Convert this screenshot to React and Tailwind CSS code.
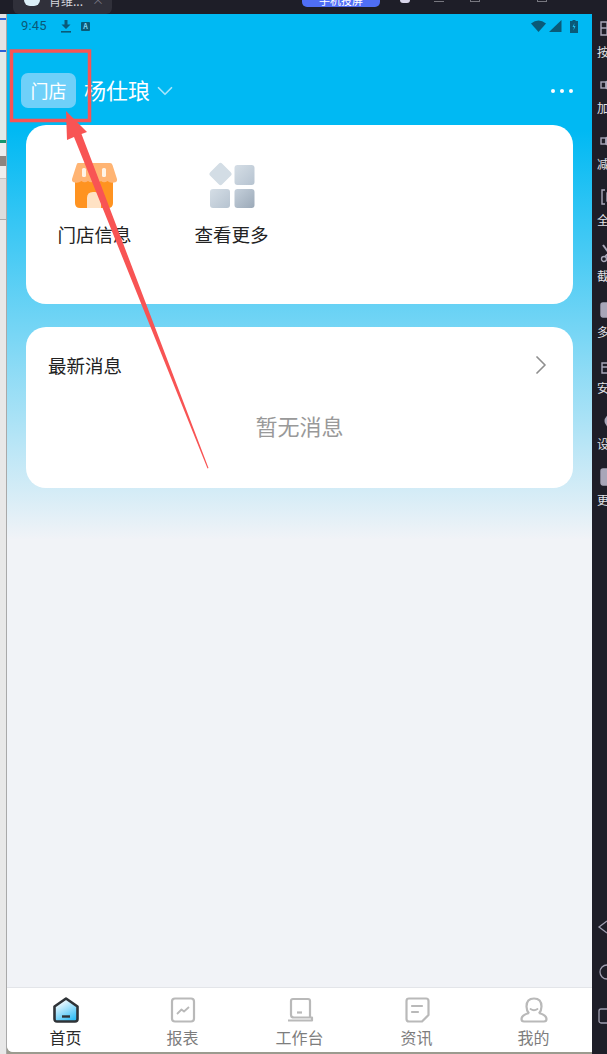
import { ChevronDown, ChevronRight } from 'lucide-react'

const GRAY = '#b9b9b9'

const TabIcon = ({ name }) => {
  if (name === 'home') {
    return (
      <svg width="28" height="28" viewBox="0 0 28 28" fill="none">
        <defs>
          <linearGradient id="homeFill" x1="0.2" y1="0.1" x2="0.7" y2="1">
            <stop offset="0" stopColor="#ffffff" />
            <stop offset="1" stopColor="#2fbcf6" />
          </linearGradient>
        </defs>
        <path d="M14 2.5 L25.5 10.5 V23 Q25.5 25.5 23 25.5 H5 Q2.5 25.5 2.5 23 V10.5 Z" fill="url(#homeFill)" stroke="#2f3337" strokeWidth="2.6" strokeLinejoin="round" />
        <path d="M10 20.5 H18" stroke="#2f3337" strokeWidth="2.4" />
      </svg>
    )
  }
  if (name === 'report') {
    return (
      <svg width="28" height="28" viewBox="0 0 28 28" fill="none" stroke={GRAY} strokeWidth="2.2" strokeLinejoin="round">
        <rect x="3" y="2.5" width="22" height="23" rx="3" />
        <path d="M8 18 L12.5 13.5 L15 15.5 L20 11" strokeWidth="1.8" />
      </svg>
    )
  }
  if (name === 'desk') {
    return (
      <svg width="28" height="28" viewBox="0 0 28 28" fill="none" stroke={GRAY} strokeWidth="2.2" strokeLinejoin="round">
        <path d="M5 19 V5 Q5 3 7 3 H22 Q24 3 24 5 V21" />
        <path d="M2 24.5 H26 V21.5 H8 Q5 21.5 5 19" />
        <path d="M11 16.5 H16" />
      </svg>
    )
  }
  if (name === 'news') {
    return (
      <svg width="28" height="28" viewBox="0 0 28 28" fill="none" stroke={GRAY} strokeWidth="2.2" strokeLinejoin="round">
        <path d="M6 2.5 H23 Q25.5 2.5 25.5 5 V19 L19 25.5 H6 Q3.5 25.5 3.5 23 V5 Q3.5 2.5 6 2.5 Z" />
        <path d="M9 10 H19 M9 16 H15" strokeLinecap="round" />
      </svg>
    )
  }
  return (
    <svg width="30" height="28" viewBox="0 0 30 28" fill="none" stroke={GRAY} strokeWidth="2.2" strokeLinejoin="round">
      <path d="M10 17.5 Q7.5 14.5 7.5 10.5 Q7.5 2.5 15 2.5 Q22.5 2.5 22.5 10.5 Q22.5 14.5 20 17.5" />
      <path d="M10 17 C7 18 2.5 19 2.5 23 Q2.5 25.5 5 25.5 H25 Q27.5 25.5 27.5 23 C27.5 19 23 18 20 17" />
      <path d="M11.5 13 Q15 15.5 18.5 13" strokeWidth="1.8" strokeLinecap="round" />
    </svg>
  )
}

const StoreIcon = () => (
  <svg width="46" height="46" viewBox="0 0 46 46">
    <path d="M3 18 H41 V41 Q41 46 36 46 H8 Q3 46 3 41 Z" fill="#ff9320" />
    <path d="M6 1 H38 Q40 1 40.5 3 L45 17 Q45.5 20.5 42 20.5 Q38 21.5 35.5 19 Q32 21.5 29 19 Q25.5 21.5 22.5 19 Q19 21.5 16 19 Q12.5 21.5 9.5 19 Q6 21.5 3 20.5 Q-0.5 20.5 0 17 L4.5 3 Q5 1 6 1 Z" fill="#ffb473" />
    <rect x="10" y="6" width="4" height="9" rx="1.5" fill="#fff3e6" />
    <rect x="30" y="6" width="4" height="9" rx="1.5" fill="#fff3e6" />
    <path d="M15 46 V36 Q15 30 21 30 H23 Q29 30 29 36 V46 Z" fill="#ffe2c4" />
  </svg>
)

const MoreIcon = () => (
  <svg width="47" height="46" viewBox="0 0 47 46">
    <defs>
      <linearGradient id="tileA" x1="0" y1="0" x2="1" y2="1">
        <stop offset="0" stopColor="#d5dee6" />
        <stop offset="1" stopColor="#b6c3d0" />
      </linearGradient>
      <linearGradient id="tileB" x1="0" y1="0" x2="1" y2="1">
        <stop offset="0" stopColor="#c5d0db" />
        <stop offset="1" stopColor="#9ba9b8" />
      </linearGradient>
    </defs>
    <rect x="4" y="3.5" width="17" height="17" rx="2.5" fill="#d3dde5" transform="rotate(45 12.5 12)" />
    <rect x="26.5" y="3" width="20" height="20" rx="3" fill="url(#tileA)" />
    <rect x="2" y="27" width="20" height="19" rx="3" fill="url(#tileA)" />
    <rect x="26.5" y="27" width="20" height="19" rx="3" fill="url(#tileB)" />
  </svg>
)

const ToolIcon = ({ type }) => {
  const cls = 'ml-[3px] w-[20px] h-[20px] shrink-0'
  const color = '#a8a6b8'
  return (
    <svg className={cls} viewBox="0 0 20 20" fill="none" stroke={color} strokeWidth="1.4">
      {type === 'grid' && <path d="M1 3 H18 V16 H1 Z M1 9 H18 M7 3 V16" />}
      {type === 'vol' && (
        <>
          <rect x="1" y="7" width="5" height="6" />
          <path d="M6 7 L12 3 V17 L6 13 Z" fill={color} />
        </>
      )}
      {type === 'full' && (
        <>
          <path d="M5 3 H2 V17 H5" />
          <rect x="7" y="6" width="10" height="8" fill={color} />
        </>
      )}
      {type === 'cut' && (
        <>
          <path d="M3 2 L12 14" strokeWidth="2" />
          <circle cx="4" cy="16" r="2.5" />
          <path d="M12 6 L5 14" strokeWidth="2" />
        </>
      )}
      {type === 'multi' && (
        <>
          <rect x="1" y="4" width="16" height="14" rx="2" fill={color} />
          <path d="M10 8 V14 M7 11 H14" stroke="#1e1e28" />
        </>
      )}
      {type === 'safe' && <path d="M2 8 H18 V18 H2 Z M2 12 H18 M9 12 V18 M8 2 L14 5" />}
      {type === 'gear' && <circle cx="11" cy="10" r="6.5" fill={color} stroke="none" />}
      {type === 'more' && (
        <>
          <rect x="1" y="2" width="17" height="16" rx="2" fill={color} />
          <circle cx="9" cy="10" r="1.5" fill="#1e1e28" stroke="none" />
        </>
      )}
    </svg>
  )
}

const tools = [
  ['grid', '按'],
  ['vol', '加'],
  ['vol', '减'],
  ['full', '全'],
  ['cut', '截'],
  ['multi', '多'],
  ['safe', '安'],
  ['gear', '设'],
  ['more', '更'],
]

const tabs = [
  ['home', '首页', true],
  ['report', '报表', false],
  ['desk', '工作台', false],
  ['news', '资讯', false],
  ['mine', '我的', false],
]

const TopBar = () => (
  <div className="h-[14px] shrink-0 bg-[#1e1e28] flex items-start overflow-hidden">
    <div className="ml-[13px] w-[99px] h-[14px] bg-[#30303a] rounded-b-[6px] flex items-start pl-[11px] gap-[9px] overflow-hidden">
      <div className="w-[16px] h-[6px] bg-[#dceff7] rounded-b-full" />
      <span className="-mt-[6px] text-[12px] leading-[14px] text-[#d8d8de]">肖维...</span>
      <span className="-mt-[7px] text-[12px] leading-[14px] text-[#777782]">×</span>
    </div>
    <div className="ml-[190px] w-[78px] h-[7px] bg-[#4f6ef5] rounded-b-[5px] flex justify-center overflow-hidden">
      <span className="-mt-[7px] text-[11px] leading-[14px] text-white">手机投屏</span>
    </div>
    <div className="ml-[20px] w-[10px] h-[3px] bg-[#d8d6ea] rounded-b-full" />
    <div className="ml-[24px] mt-[1px] w-[10px] h-[1px] bg-[#77777f]" />
    <div className="ml-[26px] w-[10px] h-[2px] border-b border-x border-[#77777f]" />
    <div className="ml-[57px] w-[10px] h-[2px] border-b border-x border-[#77777f]" />
  </div>
)

const LeftStrip = () => (
  <div className="w-[7px] shrink-0 border-r border-[#a9a9a9] bg-[#e4e4e4] flex flex-col">
    <div className="h-[4px]" />
    <div className="h-[2px] bg-[#2a62d8]" />
    <div className="h-[30px]" />
    <div className="h-[2px] bg-[#2a62d8]" />
    <div className="h-[88px] bg-[#e3ebe9]" />
    <div className="h-[3px] bg-[#16966f]" />
    <div className="h-[13px] bg-[#eeeeee]" />
    <div className="h-[10px] bg-[#8d8580]" />
    <div className="h-[12px] bg-[#eeeeee]" />
    <div className="h-[1px] bg-[#c4c4c4]" />
    <div className="h-[40px] bg-[#dddddd]" />
    <div className="h-[1px] bg-[#aaaaaa]" />
    <div className="flex-1 bg-[#e8e8e8]" />
  </div>
)

const RightBar = () => (
  <div className="flex-1 bg-[#1e1e28] pt-[5px] pb-[28px] pl-[5px] flex flex-col overflow-hidden">
    <div className="flex flex-col gap-[15px]">
      {tools.map(([type, label], i) => (
        <div key={i} className="w-[30px] flex flex-col gap-[5px]">
          <ToolIcon type={type} />
          <span className="text-[12px] leading-[16px] text-[#e2e2e6]">{label}</span>
        </div>
      ))}
    </div>
    <div className="mt-auto flex flex-col gap-[24px] w-[30px] text-[#9f9daf]">
      <svg className="w-[20px] h-[20px]" viewBox="0 0 20 20" fill="none" stroke="currentColor" strokeWidth="1.3">
        <path d="M10 3 L2 9 L10 15" />
      </svg>
      <svg className="w-[20px] h-[20px]" viewBox="0 0 20 20" fill="none" stroke="currentColor" strokeWidth="1.3">
        <circle cx="10" cy="10" r="7" />
      </svg>
      <svg className="w-[20px] h-[20px]" viewBox="0 0 20 20" fill="none" stroke="currentColor" strokeWidth="1.3">
        <rect x="2" y="3" width="14" height="14" rx="2" />
      </svg>
    </div>
  </div>
)

const StatusBar = () => (
  <div className="h-[24px] shrink-0 pl-[14px] pr-[14px] flex items-center text-[#0a5a78]">
    <span className="text-[13px] font-['Roboto',sans-serif] tracking-[0.2px]">9:45</span>
    <svg className="ml-[14px]" width="10" height="13" viewBox="0 0 10 13" fill="currentColor">
      <path d="M3.5 0 H6.5 V4.5 H9.5 L5 9 L0.5 4.5 H3.5 Z" />
      <rect x="0" y="11" width="10" height="1.6" />
    </svg>
    <div className="ml-[10px] w-[9px] h-[9px] bg-[#0a5a78] rounded-[1px] flex items-center justify-center text-[7px] leading-none font-bold text-[#7fd6f3]">A</div>
    <div className="ml-auto flex items-center gap-[3px]">
      <svg width="15" height="12" viewBox="0 0 15 12" fill="currentColor">
        <path d="M0 3.5 Q7.5 -2.5 15 3.5 L7.5 12 Z" />
      </svg>
      <svg width="13" height="12" viewBox="0 0 13 12" fill="currentColor">
        <path d="M12.5 0 V12 H0 Z" />
      </svg>
      <svg className="ml-[5px]" width="8" height="13" viewBox="0 0 8 13" fill="currentColor">
        <path d="M2.5 0 H5.5 V1 H8 V13 H0 V1 H2.5 Z" />
        <path d="M4.5 3 L2.5 7 H4 L3.5 10.5 L5.5 6 H4 Z" fill="#22c0f0" />
      </svg>
    </div>
  </div>
)

const App = () => {
  return (
    <div className="relative w-[607px] h-[1054px] overflow-hidden flex flex-col bg-[#1e1e28] font-['Noto_Sans_CJK_SC',sans-serif]">
      <TopBar />
      <div className="flex-1 min-h-0 flex">
        <LeftStrip />
        <div className="w-[585px] shrink-0 flex flex-col bg-[#9b9b8f]">
          <div className="flex-1 min-h-0 flex flex-col rounded-bl-[6px] overflow-hidden bg-[linear-gradient(180deg,#00b9f3_116px,#f1f3f7_526px)]">
            <StatusBar />

            <div className="mt-[35px] pl-[14px] pr-[19px] h-[35px] shrink-0 flex items-center">
              <span className="w-[55px] h-[35px] rounded-[7px] bg-[#6fd0f9] flex items-center justify-center text-[18px] text-white">门店</span>
              <span className="ml-[8px] pb-[2px] text-[22px] text-white">杨仕琅</span>
              <ChevronDown className="ml-[2px] text-[#a5e4fb]" size={26} strokeWidth={1.6} />
              <div className="ml-auto flex gap-[5px]">
                <span className="w-[4px] h-[4px] rounded-full bg-white" />
                <span className="w-[4px] h-[4px] rounded-full bg-white" />
                <span className="w-[4px] h-[4px] rounded-full bg-white" />
              </div>
            </div>

            <div className="mt-[17px] mx-[19px] flex flex-col gap-[23px]">
              <div className="h-[179px] bg-white rounded-[20px] flex items-start pt-[37px]">
                <div className="w-[137px] flex flex-col items-center gap-[13px]">
                  <StoreIcon />
                  <span className="text-[18.5px] leading-[26px] text-[#222]">门店信息</span>
                </div>
                <div className="w-[137px] flex flex-col items-center gap-[13px]">
                  <MoreIcon />
                  <span className="text-[18.5px] leading-[26px] text-[#222]">查看更多</span>
                </div>
              </div>

              <div className="h-[161px] bg-white rounded-[20px] px-[22px] pt-[25px] flex flex-col">
                <div className="flex items-center justify-between h-[26px]">
                  <span className="text-[18.5px] leading-[26px] text-[#222]">最新消息</span>
                  <ChevronRight className="-mr-[6px] text-[#8f8f8f]" size={32} strokeWidth={1.3} />
                </div>
                <div className="mt-[31px] text-center text-[22px] leading-[32px] text-[#999]">暂无消息</div>
              </div>
            </div>

            <div className="flex-1 min-h-0" />

            <div className="h-[65px] shrink-0 bg-white border-t border-[#e3e5e9] grid grid-cols-5">
              {tabs.map(([icon, label, active]) => (
                <div key={label} className="flex flex-col items-center pt-[8px]">
                  <TabIcon name={icon} />
                  <span className={`mt-[2px] text-[16px] leading-[22px] ${active ? 'text-[#2b2b2b]' : 'text-[#7d7d7d]'}`}>{label}</span>
                </div>
              ))}
            </div>
          </div>
          <div className="h-[2px] shrink-0" />
        </div>
        <RightBar />
      </div>

      {/* red annotation drawn over the screenshot */}
      <svg className="absolute inset-0 pointer-events-none" width="607" height="1054" viewBox="0 0 607 1054" fill="none">
        <rect x="11.5" y="51" width="78" height="69.5" stroke="#f85454" strokeWidth="3.5" />
        <path d="M66 111 L87 132 L81.500 134 L208.500 468 L207.500 468.500 L74 137 L67 140 Z" fill="#f85454" />
      </svg>
    </div>
  )
}

export default App
